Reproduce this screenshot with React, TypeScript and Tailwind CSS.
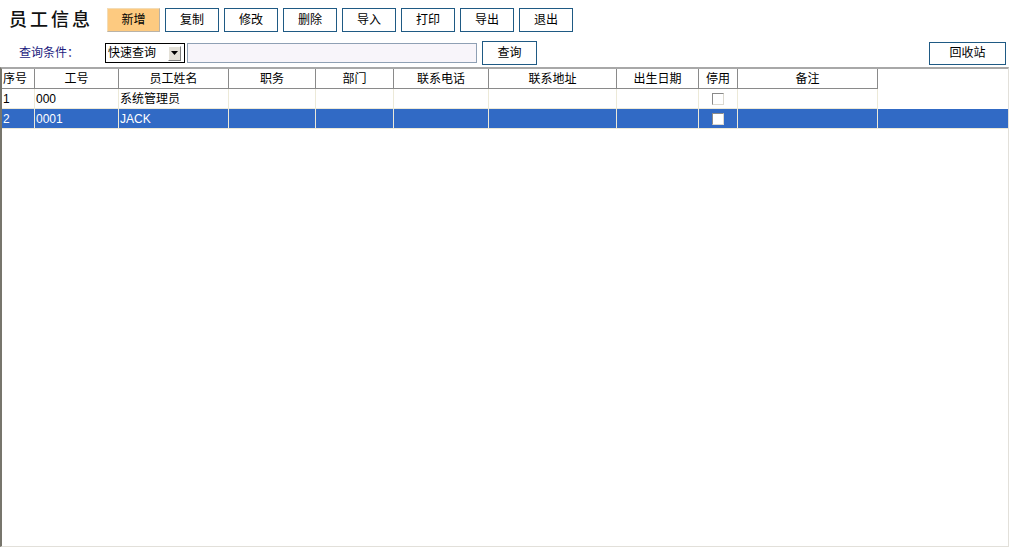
import React from "react";

const font = { fontFamily: '"Liberation Sans","Noto Sans CJK SC",sans-serif' };

const cols = [
  { name: "序号", w: 33, left: true },
  { name: "工号", w: 84 },
  { name: "员工姓名", w: 110 },
  { name: "职务", w: 87 },
  { name: "部门", w: 78 },
  { name: "联系电话", w: 95 },
  { name: "联系地址", w: 128 },
  { name: "出生日期", w: 82 },
  { name: "停用", w: 39 },
  { name: "备注", w: 140 },
];

const rows = [
  ["1", "000", "系统管理员", "", "", "", "", "", "cb", ""],
  ["2", "0001", "JACK", "", "", "", "", "", "cb", ""],
];

function Btn({ label, orange, w = 54, h = 24 }: { label: string; orange?: boolean; w?: number; h?: number }) {
  return (
    <div
      className={
        "flex items-center justify-center text-[12px] text-black box-border " +
        (orange
          ? "bg-[#fdca80] border border-t-[#f3dcb6] border-l-[#f3dcb6] border-r-[#b9b3a8] border-b-[#b9b3a8]"
          : "bg-white border border-[#1f5a84]")
      }
      style={{ width: w, height: h }}
    >
      {label}
    </div>
  );
}

function Checkbox() {
  return (
    <div className="w-[12px] h-[12px] bg-white border border-t-[#8a8a8a] border-l-[#8a8a8a] border-r-[#dcd9d0] border-b-[#dcd9d0] box-border" />
  );
}

export default function App() {
  return (
    <div className="w-[1010px] h-[553px] bg-white flex flex-col overflow-hidden" style={font}>
      {/* toolbar */}
      <div className="flex items-center h-[24px] mt-[8px]">
        <div className="w-[107px] pl-[9px] text-[18px] leading-none tracking-[3px] font-medium text-[#111]">员工信息</div>
        <div className="flex gap-[5px]">
          <Btn label="新增" orange w={53} />
          <Btn label="复制" />
          <Btn label="修改" />
          <Btn label="删除" />
          <Btn label="导入" />
          <Btn label="打印" />
          <Btn label="导出" />
          <Btn label="退出" />
        </div>
      </div>
      {/* query row */}
      <div className="flex items-center h-[24px] mt-[9px]">
        <div className="w-[105px] pl-[19px] text-[12px] text-[#1b1b7e]">查询条件：</div>
        <div className="w-[80px] h-[20px] border border-black box-border flex items-center justify-between pl-[2px] pr-[3px] text-[12px] text-black">
          <span>快速查询</span>
          <div className="w-[13px] h-[15px] bg-[#e4e1d8] border border-t-white border-l-white border-r-[#808080] border-b-[#808080] box-border flex items-center justify-center">
            <svg width="7" height="4" viewBox="0 0 7 4">
              <path d="M0 0h7L3.5 4z" fill="#000" />
            </svg>
          </div>
        </div>
        <div className="w-[290px] h-[20px] ml-[2px] bg-[#f8f5fa] border border-[#8fa0b4] box-border" />
        <div className="ml-[5px]">
          <Btn label="查询" w={55} />
        </div>
        <div className="flex-1" />
        <div className="mr-[4px]">
          <Btn label="回收站" w={77} h={23} />
        </div>
      </div>
      {/* grid */}
      <div className="mt-[2px] mr-[1px] mb-[6px] flex-1 border-t-2 border-l-2 border-r border-b border-t-[#a8a8a8] border-l-[#77756c] border-r-[#e2e0da] border-b-[#e2e0da] box-border flex flex-col text-[12px]">
        {/* header */}
        <div className="flex h-[20px]">
          {cols.map((c, i) => (
            <div
              key={i}
              className={
                "h-full box-border border-r border-b border-r-[#8a8a8a] border-b-[#8a8a8a] flex items-center text-black " +
                (c.left ? "justify-start pl-[1px]" : "justify-center")
              }
              style={{ width: c.w }}
            >
              {c.name}
            </div>
          ))}
        </div>
        {/* rows */}
        {rows.map((r, ri) => {
          const sel = ri === 1;
          return (
            <div key={ri} className={"flex h-[20px] " + (sel ? "bg-[#316ac5]" : "")}>
              {cols.map((c, ci) => (
                <div
                  key={ci}
                  className={
                    "h-full box-border border-r border-b border-[#ece9d8] flex items-center " +
                    (sel ? "text-white " : "text-black ") +
                    (r[ci] === "cb" ? "justify-center" : "pl-[1px]")
                  }
                  style={{ width: c.w }}
                >
                  {r[ci] === "cb" ? <Checkbox /> : r[ci]}
                </div>
              ))}
              <div className={"flex-1 h-full box-border " + (sel ? "border-b border-[#ece9d8]" : "")} />
            </div>
          );
        })}
        <div className="flex-1" />
      </div>
    </div>
  );
}
